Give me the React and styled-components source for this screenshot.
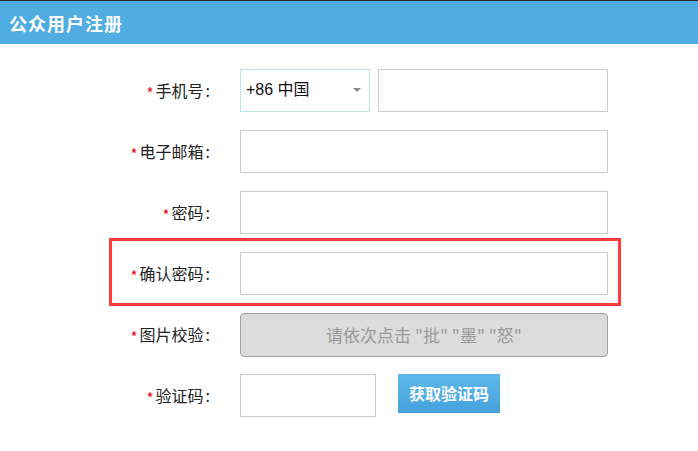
import * as React from "react"
import styled, { createGlobalStyle } from "styled-components"

const GlobalStyle = createGlobalStyle`
  html, body {
    margin: 0;
    padding: 0;
    background: #fff;
    font-family: "Noto Sans CJK SC", "Liberation Sans", sans-serif;
  }
`

const Page = styled.div`
  width: 698px;
  min-height: 451px;
  border-top: 1px solid #2b2b2b;
  box-sizing: border-box;
`

const Header = styled.div`
  height: 43px;
  background: #4fade1;
  display: flex;
  align-items: center;
  padding-left: 9px;
  color: #fff;
  font-size: 18px;
  font-weight: bold;
  letter-spacing: 1px;
`

const Form = styled.div`
  margin: 25px 0 0 112px;
  width: 506px;
  display: flex;
  flex-direction: column;
  gap: 18px;
`

const Row = styled.div`
  display: flex;
  align-items: center;
  height: 43px;
  ${(p) =>
    p.$highlight &&
    `
    border: 3px solid #ff3b3b;
    margin: -14px -3px -11px -3px;
    padding: 11px 0 8px 0;
  `}
`

const Label = styled.div`
  width: 98px;
  height: 43px;
  text-align: right;
  font-size: 16px;
  color: #222;
  line-height: 43px;
  white-space: nowrap;
`

const Star = styled.span`
  display: inline-block;
  color: #e60012;
  font-size: 15px;
  line-height: 1;
  margin-right: 2px;
  transform: translateY(2px);
`

const Colon = styled.span`
  margin-left: 2px;
`

const Field = styled.div`
  margin-left: 30px;
  width: 368px;
  display: flex;
  gap: ${(p) => p.$gap || 0}px;
  align-items: flex-start;
`

const Input = styled.div`
  box-sizing: border-box;
  height: 43px;
  width: ${(p) => (p.$w ? `${p.$w}px` : "100%")};
  border: 1px solid #cccccc;
  background: #fff;
`

const Select = styled.div`
  box-sizing: border-box;
  height: 43px;
  width: 130px;
  border: 1px solid #bfe2f4;
  display: flex;
  align-items: center;
  justify-content: space-between;
  padding: 0 8px 5px 5px;
  font-size: 16px;
  color: #111;
  font-family: "Liberation Sans", "Noto Sans CJK SC", sans-serif;
`

const Caret = styled.span`
  width: 0;
  height: 0;
  margin-top: 4px;
  border-left: 4px solid transparent;
  border-right: 4px solid transparent;
  border-top: 4px solid #888;
`

const Captcha = styled.div`
  box-sizing: border-box;
  height: 44px;
  width: 100%;
  border: 1px solid #a3a3a3;
  border-radius: 4px;
  background: #dcdcdc;
  color: #999;
  font-size: 17px;
  display: flex;
  align-items: center;
  justify-content: center;
`

const CodeButton = styled.div`
  height: 39px;
  width: 102px;
  background: linear-gradient(#5cb9e9, #47a2dd);
  border-bottom: 1px solid #3f97d6;
  box-sizing: border-box;
  color: #fff;
  font-weight: bold;
  font-size: 16px;
  display: flex;
  align-items: center;
  justify-content: center;
`

const fields = [
  { label: "电子邮箱" },
  { label: "密码" },
  { label: "确认密码", highlight: true },
]

const FieldLabel = ({ children }) => (
  <Label>
    <Star>*</Star>
    {children}
    <Colon>:</Colon>
  </Label>
)

const App = () => {
  return (
    <>
      <GlobalStyle />
      <Page>
        <Header>公众用户注册</Header>
        <Form>
          <Row>
            <FieldLabel>手机号</FieldLabel>
            <Field $gap={8}>
              <Select>
                <span>+86 中国</span>
                <Caret />
              </Select>
              <Input $w={230} />
            </Field>
          </Row>
          {fields.map((f) => (
            <Row key={f.label} $highlight={f.highlight}>
              <FieldLabel>{f.label}</FieldLabel>
              <Field>
                <Input />
              </Field>
            </Row>
          ))}
          <Row>
            <FieldLabel>图片校验</FieldLabel>
            <Field>
              <Captcha>请依次点击 "批" "墨" "怒"</Captcha>
            </Field>
          </Row>
          <Row>
            <FieldLabel>验证码</FieldLabel>
            <Field $gap={22}>
              <Input $w={136} />
              <CodeButton>获取验证码</CodeButton>
            </Field>
          </Row>
        </Form>
      </Page>
    </>
  )
}

export default App
